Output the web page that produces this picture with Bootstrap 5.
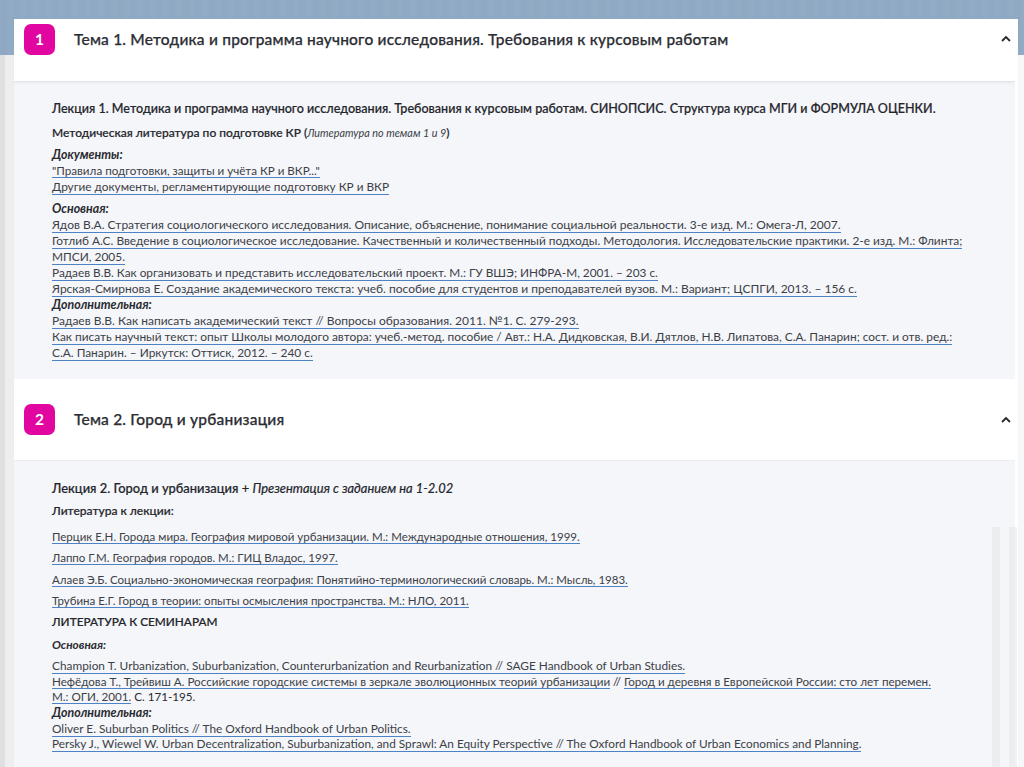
<!DOCTYPE html>
<html lang="ru"><head><meta charset="utf-8"><title>Темы</title>
<link rel="stylesheet" href="https://cdn.jsdelivr.net/npm/bootstrap@5.3.0/dist/css/bootstrap.min.css">
<style>
html,body{height:767px;overflow:hidden}
body{background:linear-gradient(90deg,#dedfe0 0 5px,#eeeeef 5px 14px,#f6f7f9 14px);font-family:"Lato","Noto Sans",sans-serif;color:#2a2b30;position:relative}
.slide-band{height:55px;margin-bottom:-36px;background:repeating-linear-gradient(90deg,#8fa9c4 0 7px,#92abc5 7px 13px)}
.slide-sheet{margin:0 6px 0 14px;background:#f4f6fa;height:746px;overflow:hidden;border-right:3px solid #fff;position:relative}
.topic-head{height:61px;background:#fff;padding:0 3px 0 10px}
.topic-head-a{height:62px;padding-top:5px;box-shadow:0 2px 4px rgba(60,70,90,.07);position:relative}
.topic-num{width:31px;height:31px;border-radius:7px;background:#e0069f;color:#fff;font-weight:700;font-size:15.5px}
.topic-title{margin-left:19px;font-size:15.5px;font-weight:500;color:#2c2d33;letter-spacing:.2px;-webkit-text-stroke:.25px #2c2d33}
.topic-body{padding:0 50px 0 38px;font-size:12px;line-height:16px;border-top:1px solid #ebedf1}
.topic-body p{margin:0}
.topic-body a{color:#3c4046;text-decoration:none;border-bottom:1px solid #4d82c4}
.lead-line{font-size:12.56px;font-weight:500;color:#24252a;-webkit-text-stroke:.2px #24252a}
.lead-wide{font-size:12.9px}
.lead-caps{font-size:11.8px}
.sub-line{font-size:12px;font-weight:500;color:#24252a;-webkit-text-stroke:.2px #24252a}
.sub-line i{-webkit-text-stroke:0;color:#3c4046;font-size:10.8px}
.group-label{font-size:12.4px;font-weight:700;font-style:italic;color:#2a2b30}
.tiny-label{font-size:11.8px}
.first-body{height:298px;padding-top:19px}
.second-body{height:286px;padding-top:19px}
.tight-links{font-size:11.5px}
.latin-links{font-size:11.85px;line-height:15.6px}
.seminar-tail{line-height:15.6px}
.line-65{font-size:11.65px}
.line-80{font-size:11.8px}
.line-90{font-size:11.9px}
.gap-7{margin-top:7px!important}
.gap-8{margin-top:8px!important}
.gap-6{margin-top:6px!important}
.gap-10{margin-top:10px!important}
.gap-5{margin-top:5.3px!important}
.gap-4{margin-top:5px!important}
.chev{width:12px;height:8px}
.chev-first{margin-top:11px}
.ghost-bar{position:absolute;top:527px;bottom:0;width:8px;background:rgba(226,226,226,.45)}
.ghost-a{left:992px}
.ghost-b{left:1009px}
</style></head>
<body>
<div class="slide-band"></div>
<main class="slide-sheet">
<section>
<div class="topic-head topic-head-a d-flex align-items-start">
<div class="topic-num d-flex align-items-center justify-content-center">1</div>
<div class="topic-title mt-1">Тема 1. Методика и программа научного исследования. Требования к курсовым работам</div>
<svg class="chev chev-first ms-auto" viewBox="0 0 12 8"><path d="M2 6 6 2 10 6" fill="none" stroke="#26272b" stroke-width="1.8"/></svg>
</div>
<div class="topic-body first-body">
<p class="lead-line text-nowrap">Лекция 1. Методика и программа научного исследования. Требования к курсовым работам. СИНОПСИС. Структура курса МГИ и ФОРМУЛА ОЦЕНКИ.</p>
<p class="sub-line gap-8">Методическая литература по подготовке КР (<i class="fw-normal">Литература по темам 1 и 9</i>)</p>
<p class="group-label gap-6">Документы:</p>
<p class="line-65"><a href="#">"Правила подготовки, защиты и учёта КР и ВКР..."</a></p>
<p class="line-80"><a href="#">Другие документы, регламентирующие подготовку КР и ВКР</a></p>
<p class="group-label gap-6">Основная:</p>
<p><a href="#">Ядов В.А. Стратегия социологического исследования. Описание, объяснение, понимание социальной реальности. 3-е изд. М.: Омега-Л, 2007.</a></p>
<p class="line-90"><a href="#">Готлиб А.С. Введение в социологическое исследование. Качественный и количественный подходы. Методология. Исследовательские практики. 2-е изд. М.: Флинта; МПСИ, 2005.</a></p>
<p class="line-80"><a href="#">Радаев В.В. Как организовать и представить исследовательский проект. М.: ГУ ВШЭ; ИНФРА-М, 2001. – 203 с.</a></p>
<p><a href="#">Ярская-Смирнова Е. Создание академического текста: учеб. пособие для студентов и преподавателей вузов. М.: Вариант; ЦСПГИ, 2013. – 156 с.</a></p>
<p class="group-label">Дополнительная:</p>
<p><a href="#">Радаев В.В. Как написать академический текст // Вопросы образования. 2011. №1. С. 279-293.</a></p>
<p class="line-90"><a href="#">Как писать научный текст: опыт Школы молодого автора: учеб.-метод. пособие / Авт.: Н.А. Дидковская, В.И. Дятлов, Н.В. Липатова, С.А. Панарин; сост. и отв. ред.: С.А. Панарин. – Иркутск: Оттиск, 2012. – 240 с.</a></p>
</div>
</section>
<section>
<div class="topic-head d-flex align-items-center" style="height:81px">
<div class="topic-num d-flex align-items-center justify-content-center">2</div>
<div class="topic-title">Тема 2. Город и урбанизация</div>
<svg class="chev ms-auto" viewBox="0 0 12 8"><path d="M2 6 6 2 10 6" fill="none" stroke="#26272b" stroke-width="1.8"/></svg>
</div>
<div class="topic-body second-body">
<p class="lead-line lead-wide">Лекция 2. Город и урбанизация <span class="fw-normal">+</span> <i class="fw-normal">Презентация с заданием на 1-2.02</i></p>
<p class="sub-line gap-7">Литература к лекции:</p>
<div class="tight-links">
<p class="gap-10"><a href="#">Перцик Е.Н. Города мира. География мировой урбанизации. М.: Международные отношения, 1999.</a></p>
<p class="gap-5"><a href="#">Лаппо Г.М. География городов. М.: ГИЦ Владос, 1997.</a></p>
<p class="gap-5"><a href="#">Алаев Э.Б. Социально-экономическая география: Понятийно-терминологический словарь. М.: Мысль, 1983.</a></p>
<p class="gap-5"><a href="#">Трубина Е.Г. Город в теории: опыты осмысления пространства. М.: НЛО, 2011.</a></p>
</div>
<p class="lead-line lead-caps gap-5">ЛИТЕРАТУРА К СЕМИНАРАМ</p>
<p class="group-label tiny-label gap-7">Основная:</p>
<div class="latin-links">
<p class="gap-4"><a href="#">Champion T. Urbanization, Suburbanization, Counterurbanization and Reurbanization // SAGE Handbook of Urban Studies.</a></p>
<p class="line-65"><a href="#">Нефёдова Т., Трейвиш А. Российские городские системы в зеркале эволюционных теорий урбанизации</a> // <a href="#">Город и деревня в Европейской России: сто лет перемен.<br>М.: ОГИ, 2001.</a> С. 171-195.</p>
</div>
<p class="group-label seminar-tail">Дополнительная:</p>
<div class="latin-links">
<p><a href="#">Oliver E. Suburban Politics // The Oxford Handbook of Urban Politics.</a></p>
<p class="line-80"><a href="#">Persky J., Wiewel W. Urban Decentralization, Suburbanization, and Sprawl: An Equity Perspective // The Oxford Handbook of Urban Economics and Planning.</a></p>
</div>
</div>
</section>
</main>
<div class="ghost-bar ghost-a"></div>
<div class="ghost-bar ghost-b"></div>
</body></html>
